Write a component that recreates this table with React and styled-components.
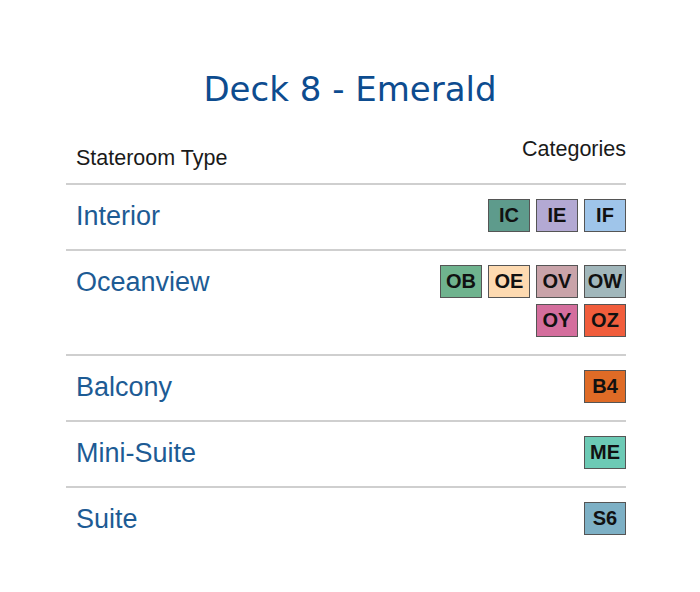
import React from 'react';
import styled, { createGlobalStyle } from 'styled-components';

const GlobalStyle = createGlobalStyle`
  html, body {
    margin: 0;
    padding: 0;
    background: #ffffff;
  }
  body {
    font-family: "Liberation Sans", Arial, sans-serif;
  }
`;

const rooms = [
  { name: 'Interior', cats: [['IC', '#5e9b8c'], ['IE', '#b3a9d3'], ['IF', '#9fc5ea']] },
  {
    name: 'Oceanview',
    cats: [
      ['OB', '#6fb38e'],
      ['OE', '#fddab1'],
      ['OV', '#c9a3a9'],
      ['OW', '#a1b7bb'],
      ['OY', '#d46e9d'],
      ['OZ', '#f15d3c'],
    ],
  },
  { name: 'Balcony', cats: [['B4', '#df6b26']] },
  { name: 'Mini-Suite', cats: [['ME', '#6ccab5']] },
  { name: 'Suite', cats: [['S6', '#7db0c5']] },
];

const Page = styled.div`
  width: 700px;
  height: 592px;
  padding-top: 69px;
  box-sizing: border-box;
`;

const Title = styled.h1`
  margin: 0;
  text-align: center;
  font-family: "Comic Sans MS", "DejaVu Sans", sans-serif;
  font-weight: normal;
  font-size: 34px;
  line-height: 40px;
  color: #0d4c8f;
`;

const Table = styled.div`
  width: 560px;
  margin: 28px 0 0 66px;
`;

const Header = styled.div`
  display: flex;
  justify-content: space-between;
  align-items: flex-start;
  height: 46px;
  border-bottom: 2px solid #cfcfcf;
  font-size: 21.5px;
  line-height: 24px;
  color: #1a1a1a;
`;

const HeadCell = styled.div`
  padding-left: ${p => (p.$left ? '10px' : '0')};
  margin-top: ${p => p.$drop || 0}px;
`;

const Row = styled.div`
  display: flex;
  justify-content: space-between;
  align-items: flex-start;
  padding: 14px 0 17px;
  border-bottom: ${p => (p.$last ? 'none' : '2px solid #cfcfcf')};
`;

const Name = styled.div`
  padding: 2px 0 0 10px;
  font-size: 27px;
  line-height: 31px;
  color: #1d5b94;
`;

const Badges = styled.div`
  display: flex;
  flex-wrap: wrap;
  justify-content: flex-end;
  gap: 6px;
  width: 186px;
`;

const Badge = styled.div`
  width: 42px;
  height: 33px;
  box-sizing: border-box;
  border: 1px solid #555;
  background: ${p => p.$bg};
  display: flex;
  align-items: center;
  justify-content: center;
  font-weight: bold;
  font-size: 20px;
  color: #111;
`;

export default function App() {
  return (
    <>
      <GlobalStyle />
      <Page>
        <Title>Deck 8 - Emerald</Title>
        <Table>
          <Header>
            <HeadCell $left $drop={9}>Stateroom Type</HeadCell>
            <HeadCell>Categories</HeadCell>
          </Header>
          {rooms.map((r, i) => (
            <Row key={r.name} $last={i === rooms.length - 1}>
              <Name>{r.name}</Name>
              <Badges>
                {r.cats.map(([code, bg]) => (
                  <Badge key={code} $bg={bg}>{code}</Badge>
                ))}
              </Badges>
            </Row>
          ))}
        </Table>
      </Page>
    </>
  );
}
